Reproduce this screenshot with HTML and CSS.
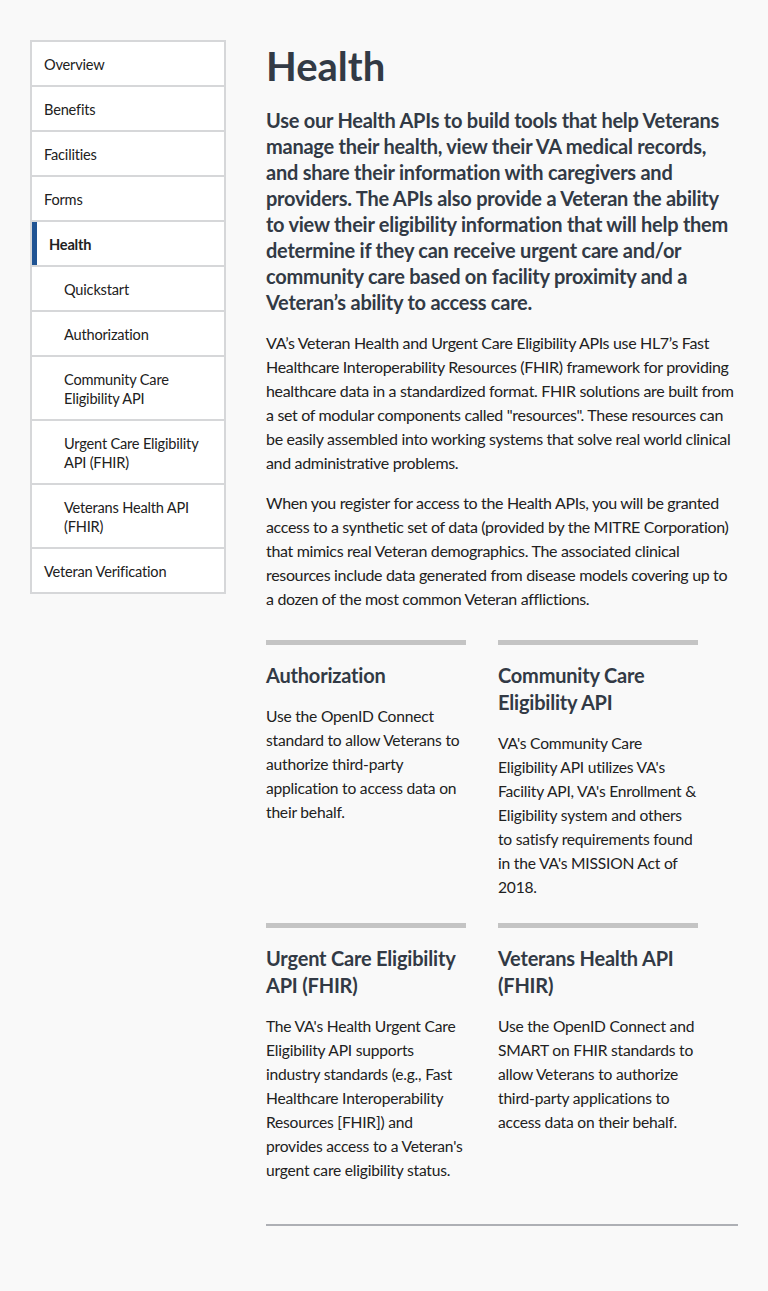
FILE: index.html
```html
<!DOCTYPE html>
<html lang="en">
<head>
<meta charset="utf-8">
<title>Health</title>
<link rel="stylesheet" href="styles.css">
</head>
<body>
<div class="page">
  <nav class="sidenav">
    <ul>
      <li><a class="item">Overview</a></li>
      <li><a class="item">Benefits</a></li>
      <li><a class="item">Facilities</a></li>
      <li><a class="item">Forms</a></li>
      <li><a class="item active">Health</a></li>
      <li><a class="item sub">Quickstart</a></li>
      <li><a class="item sub">Authorization</a></li>
      <li><a class="item sub">Community Care Eligibility API</a></li>
      <li><a class="item sub">Urgent Care Eligibility API (FHIR)</a></li>
      <li><a class="item sub">Veterans Health API (FHIR)</a></li>
      <li><a class="item">Veteran Verification</a></li>
    </ul>
  </nav>
  <main class="content">
    <h1 class="title">Health</h1>
    <p class="lead">Use our Health APIs to build tools that help Veterans manage their health, view their VA medical records, and share their information with caregivers and providers. The APIs also provide a Veteran the ability to view their eligibility information that will help them determine if they can receive urgent care and/or community care based on facility proximity and a Veteran’s ability to access care.</p>
    <p class="body">VA’s Veteran Health and Urgent Care Eligibility APIs use HL7’s Fast Healthcare Interoperability Resources (FHIR) framework for providing healthcare data in a standardized format. FHIR solutions are built from a set of modular components called "resources". These resources can be easily assembled into working systems that solve real world clinical and administrative problems.</p>
    <p class="body">When you register for access to the Health APIs, you will be granted access to a synthetic set of data (provided by the MITRE Corporation) that mimics real Veteran demographics. The associated clinical resources include data generated from disease models covering up to a dozen of the most common Veteran afflictions.</p>
    <div class="cards">
      <section class="card">
        <h3 class="card-title">Authorization</h3>
        <p class="card-text">Use the OpenID Connect standard to allow Veterans to authorize third-party application to access data on their behalf.</p>
      </section>
      <section class="card">
        <h3 class="card-title">Community Care Eligibility API</h3>
        <p class="card-text">VA's Community Care Eligibility API utilizes VA's Facility API, VA's Enrollment &amp; Eligibility system and others to satisfy requirements found in the VA's MISSION Act of 2018.</p>
      </section>
      <section class="card">
        <h3 class="card-title">Urgent Care Eligibility API (FHIR)</h3>
        <p class="card-text">The VA's Health Urgent Care Eligibility API supports industry standards (e.g., Fast Healthcare Interoperability Resources [FHIR]) and provides access to a Veteran's urgent care eligibility status.</p>
      </section>
      <section class="card">
        <h3 class="card-title">Veterans Health API (FHIR)</h3>
        <p class="card-text">Use the OpenID Connect and SMART on FHIR standards to allow Veterans to authorize third-party applications to access data on their behalf.</p>
      </section>
    </div>
    <hr class="rule">
  </main>
</div>
</body>
</html>
```

FILE: styles.css
```css
html, body {
  margin: 0;
  padding: 0;
  background: #f9f9f9;
}
body {
  font-family: "Lato", "Liberation Sans", sans-serif;
  color: #212121;
}
.page {
  display: flex;
  align-items: flex-start;
  padding: 40px 30px 40px 30px;
  gap: 40px;
}
.sidenav {
  width: 196px;
  flex: none;
}
.sidenav ul {
  list-style: none;
  margin: 0;
  padding: 0;
  border: 2px solid #d6d7d9;
  background: #fff;
}
.sidenav li + li {
  border-top: 2px solid #d6d7d9;
}
.item {
  display: block;
  padding: 13px 12px 11px 12px;
  font-size: 14.6px;
  line-height: 19px;
  letter-spacing: -0.2px;
  color: #212121;
}
.item.sub {
  padding-left: 32px;
  padding-right: 16px;
}
.item.active {
  font-weight: 700;
  border-left: 5px solid #205493;
  padding-left: 12px;
}
.content {
  flex: 1;
  min-width: 0;
}
.title {
  margin: 2px 0 0 0;
  font-size: 40px;
  line-height: 48px;
  font-weight: 700;
  color: #323a45;
}
.lead {
  margin: 17px 0 0 0;
  font-size: 20px;
  line-height: 26px;
  font-weight: 700;
  letter-spacing: -0.25px;
  color: #323a45;
}
.body {
  margin: 16px 0 0 0;
  font-size: 16px;
  line-height: 24px;
  letter-spacing: -0.33px;
}
.body + .body {
  margin-top: 16px;
}
.cards {
  display: grid;
  grid-template-columns: 200px 200px;
  column-gap: 32px;
  row-gap: 24px;
  margin-top: 29px;
}
.card {
  border-top: 5px solid #c4c4c4;
}
.card-title {
  margin: 17px 0 0 0;
  font-size: 20px;
  line-height: 27px;
  font-weight: 700;
  letter-spacing: -0.2px;
  color: #323a45;
}
.card-text {
  margin: 15px 0 0 0;
  font-size: 15.6px;
  line-height: 24px;
  letter-spacing: -0.21px;
}
.rule {
  margin: 42px 0 0 0;
  border: 0;
  border-top: 2px solid #aeb0b5;
  height: 0;
}
```
